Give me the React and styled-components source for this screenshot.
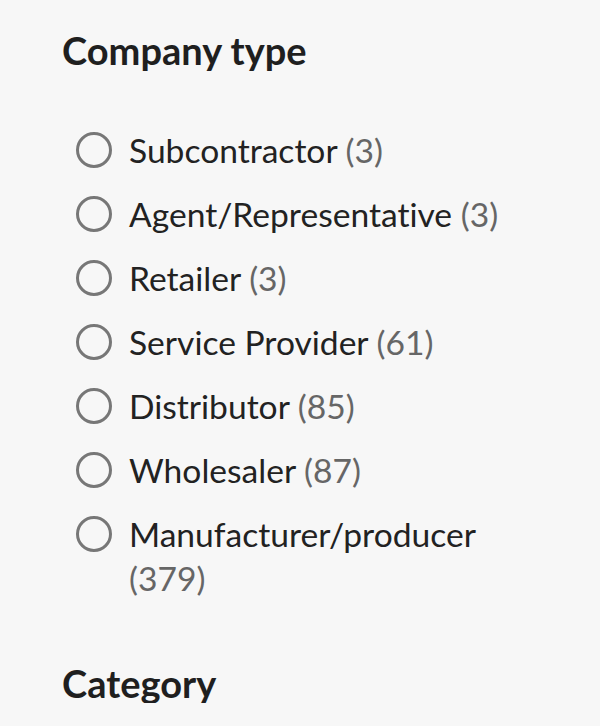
import React from "react";
import styled, { createGlobalStyle } from "styled-components";

const GlobalStyle = createGlobalStyle`
  html, body {
    margin: 0;
    padding: 0;
    background: #f7f7f7;
  }
  body {
    font-family: Lato, "Open Sans", sans-serif;
    font-variant-ligatures: none;
  }
`;

const Panel = styled.div`
  padding: 30px 0 0 62px;
  width: 538px;
  box-sizing: content-box;
`;

const Heading = styled.h2`
  margin: 0;
  font-size: 38px;
  line-height: 40px;
  font-weight: 700;
  color: #1f1f1f;
`;

const OptionList = styled.ul`
  list-style: none;
  margin: 58px 0 0;
  padding: 0 0 0 14px;
  display: flex;
  flex-direction: column;
  gap: 20px;
`;

const Option = styled.li`
  display: flex;
  align-items: flex-start;
  gap: 17px;
  width: 455px;
`;

const Radio = styled.span`
  flex: none;
  width: 36px;
  height: 36px;
  margin-top: 4px;
  border: 3px solid #777;
  border-radius: 50%;
  box-sizing: border-box;
`;

const Label = styled.span`
  font-size: 33.6px;
  line-height: 44px;
  color: #222;
`;

const Count = styled.span`
  color: #666;
`;

const NextHeading = styled(Heading)`
  margin-top: 63px;
`;

const companyTypes = [
  { name: "Subcontractor", count: 3 },
  { name: "Agent/Representative", count: 3 },
  { name: "Retailer", count: 3 },
  { name: "Service Provider", count: 61 },
  { name: "Distributor", count: 85 },
  { name: "Wholesaler", count: 87 },
  { name: "Manufacturer/producer", count: 379 },
];

export default function App() {
  return (
    <>
      <GlobalStyle />
      <Panel>
        <Heading>Company type</Heading>
        <OptionList>
          {companyTypes.map((t) => (
            <Option key={t.name}>
              <Radio />
              <Label>
                {t.name} <Count>({t.count})</Count>
              </Label>
            </Option>
          ))}
        </OptionList>
        <NextHeading>Category</NextHeading>
      </Panel>
    </>
  );
}
